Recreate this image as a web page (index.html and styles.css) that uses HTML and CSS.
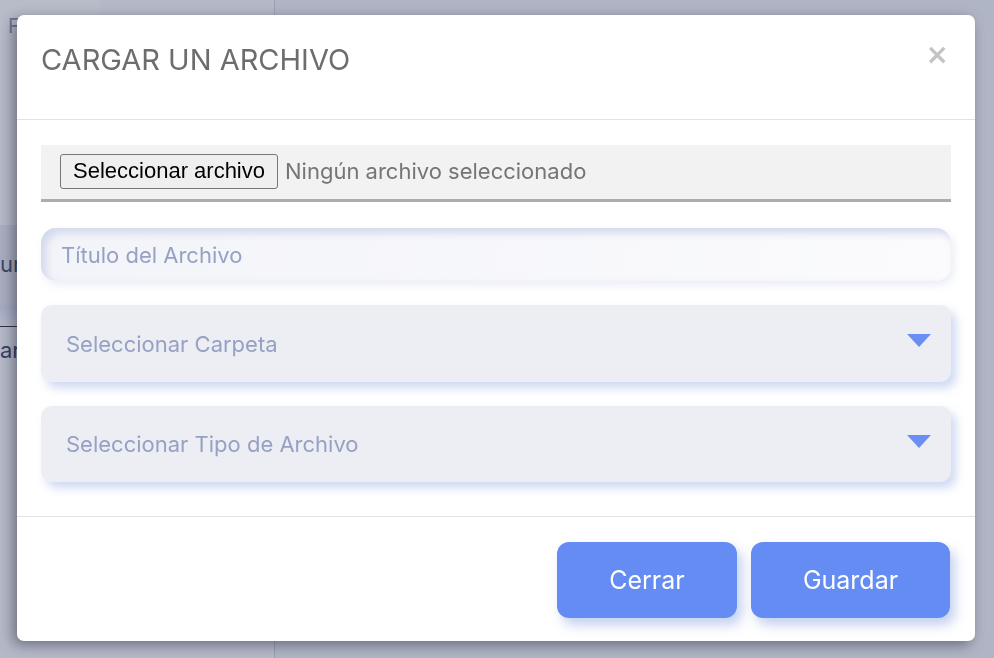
FILE: index.html
```html
<!DOCTYPE html>
<html lang="es">
<head>
    <meta charset="utf-8" />
    <title>Cargar un archivo</title>
    <link rel="stylesheet" href="styles.css">
</head>
<body>
    <div class="pagina">
        <div class="lateral">
            <div class="lateral-top">F</div>
            <div class="lateral-item">urso</div>
            <div class="lateral-linea"></div>
            <div class="lateral-item2">ar</div>
        </div>
        <div class="contenido"></div>
    </div>

    <div class="fondo">
        <div class="modal">
            <div class="modal-cabecera">
                <h2>CARGAR UN ARCHIVO</h2>
                <span class="cerrar">&times;</span>
            </div>
            <div class="modal-cuerpo">
                <div class="archivo">
                    <button class="btArchivo">Seleccionar archivo</button>
                    <span class="sinArchivo">Ningún archivo seleccionado</span>
                </div>
                <input class="campo" type="text" placeholder="Título del Archivo" />
                <div class="selector">
                    <span>Seleccionar Carpeta</span>
                    <span class="flecha"></span>
                </div>
                <div class="selector">
                    <span>Seleccionar Tipo de Archivo</span>
                    <span class="flecha"></span>
                </div>
            </div>
            <div class="modal-pie">
                <button class="boton btCerrar">Cerrar</button>
                <button class="boton btGuardar">Guardar</button>
            </div>
        </div>
    </div>
</body>
</html>
```
FILE: styles.css
```css
*{
    padding:0px;
    margin:0px;
    box-sizing:border-box;
}
body{
    font-family:Inter, "Noto Sans", sans-serif;
    background:#f4f5f9;
    width:994px;
    height:658px;
    overflow:hidden;
}
.pagina{
    display:flex;
    height:100%;
}
.lateral{
    width:275px;
    background:#fafbfd;
    border-right:1px solid #d4d6dc;
    display:flex;
    flex-direction:column;
}
.lateral-top{
    height:40px;
    width:100px;
    background:#fff;
    border-radius:0 0 14px 0;
    color:#8f96b0;
    font-size:20px;
    padding:14px 8px;
}
.lateral-item{
    margin-top:185px;
    height:80px;
    background:#e9ebf2;
    color:#4a5270;
    font-size:22px;
    padding:26px 0 0 0;
}
.lateral-linea{
    height:22px;
    border-bottom:1px solid #333;
    background:linear-gradient(#dfe6fb, #fafbfd);
}
.lateral-item2{
    color:#3e4764;
    font-size:22px;
    padding-top:10px;
}
.contenido{
    flex:1;
}
.fondo{
    position:fixed;
    inset:0;
    background:rgba(40,52,92,0.33);
    padding:15px 19px 17px 17px;
    display:flex;
}
.modal{
    flex:1;
    background:#fff;
    border-radius:7px;
    box-shadow:-4px 4px 14px rgba(20,20,40,0.45);
    display:flex;
    flex-direction:column;
}
.modal-cabecera{
    height:105px;
    border-bottom:1px solid #e3e3e3;
    display:flex;
    align-items:center;
    justify-content:space-between;
    padding:0 24px;
}
.modal-cabecera h2{
    font-weight:400;
    font-size:29px;
    color:#6d6d6d;
    margin-top:-16px;
}
.cerrar{
    font-family:"DejaVu Sans", sans-serif;
    font-weight:bold;
    font-size:28px;
    color:#c4c4c4;
    margin-top:-26px;
    margin-right:2px;
}
.modal-cuerpo{
    padding:25px 24px 34px;
    border-bottom:1px solid #e3e3e3;
    display:flex;
    flex-direction:column;
}
.archivo{
    height:57px;
    background:#f2f2f2;
    border-bottom:3px solid #adadad;
    display:flex;
    align-items:center;
    padding:0 19px;
    gap:7px;
}
.btArchivo{
    font-family:"Liberation Sans", Arial, sans-serif;
    font-size:22px;
    color:#000;
    background:#efefef;
    border:1px solid #767676;
    border-radius:3px;
    padding:2px 12px 3px;
    height:35px;
    margin-top:-1px;
}
.sinArchivo{
    font-size:22px;
    color:#757575;
    margin-top:-2px;
}
.campo{
    margin-top:26px;
    height:53px;
    border:none;
    outline:none;
    border-radius:15px;
    background:linear-gradient(to right, #f3f4f9, #fbfbfd);
    box-shadow:inset 5px 5px 9px #d2d8ec, 3px 4px 8px rgba(220,225,240,0.6);
    font-family:Inter, sans-serif;
    font-size:22px;
    padding:0 20px;
}
.campo::placeholder{
    color:#96a1c3;
}
.selector{
    margin-top:24px;
    height:77px;
    border-radius:11px;
    background:#edeef4;
    box-shadow:5px 6px 10px rgba(120,145,220,0.35);
    display:flex;
    align-items:center;
    justify-content:space-between;
    padding:0 20px 0 25px;
    color:#96a1c3;
    font-size:22px;
}
.selector + .selector{
    height:76px;
}
.flecha{
    width:0;
    height:0;
    border-left:12.5px solid transparent;
    border-right:12.5px solid transparent;
    border-top:13px solid #6a8ef3;
    margin-top:-6px;
}
.modal-pie{
    flex:1;
    display:flex;
    justify-content:flex-end;
    align-items:flex-start;
    padding:25px 25px 0;
    gap:14px;
}
.boton{
    height:76px;
    border:none;
    border-radius:12px;
    background:#648cf2;
    color:#fff;
    font-family:Inter, sans-serif;
    font-size:25px;
    box-shadow:5px 7px 12px rgba(90,120,210,0.35);
}
.btCerrar{
    width:180px;
}
.btGuardar{
    width:199px;
}
```
